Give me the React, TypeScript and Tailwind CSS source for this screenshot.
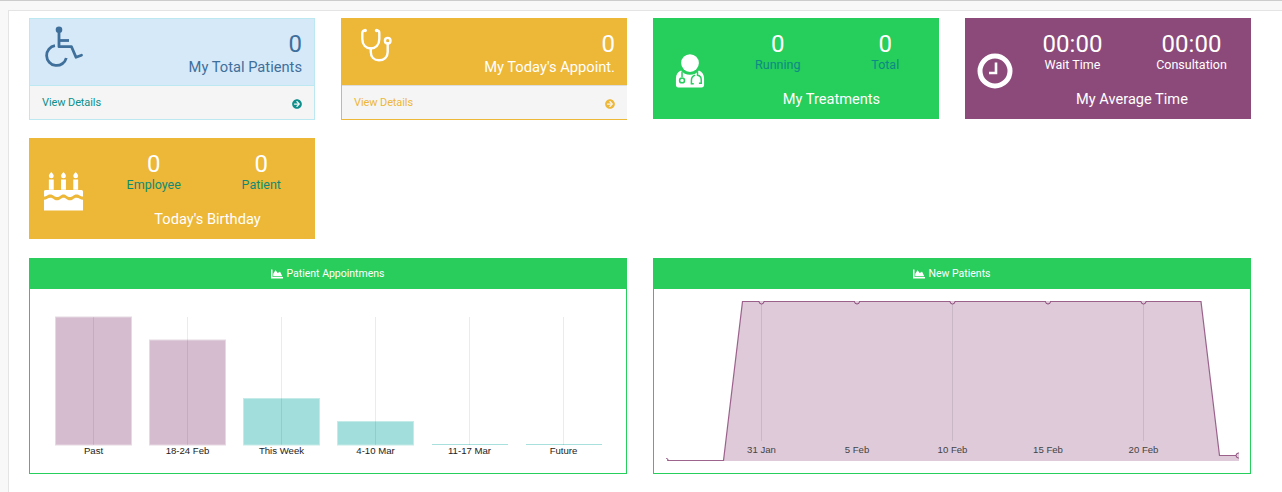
import { FaArrowCircleRight, FaChartArea } from "react-icons/fa";

const WheelchairIcon = () => (
  <svg width="40" height="42" viewBox="0 0 40 42" fill="none" stroke="#3f6f9b" strokeWidth="2.800">
    <circle cx="15" cy="3.700" r="3.300" fill="#3f6f9b" stroke="none" />
    <path d="M15 5v15.700h12.500l4.500 10.500 5.500-2" strokeLinecap="round" strokeLinejoin="round" />
    <path d="M15 14.500h10" />
    <path d="M11 19.600a10 10 0 1 0 11.300 12.400" />
  </svg>
);

const StethoscopeIcon = () => (
  <svg width="36" height="38" viewBox="0 0 36 38" fill="none" stroke="#fff" strokeWidth="2.400" strokeLinecap="round">
    <path d="M7 5.500h-.5C5 5.500 4.300 6.500 4.300 8v6c0 6 3.700 9.500 8.500 9.500s8.500-3.500 8.500-9.500V8c0-1.500-.8-2.500-2.300-2.500h-.3" />
    <circle cx="7.200" cy="5.500" r="1.700" fill="#fff" stroke="none" />
    <circle cx="18.600" cy="5.500" r="1.700" fill="#fff" stroke="none" />
    <path d="M12.800 23.500V27c0 5 3.200 8.300 8.200 8.300s8.700-3.300 8.700-8.300v-8.500" />
    <circle cx="29.700" cy="15.700" r="2.800" />
  </svg>
);

const DoctorIcon = () => (
  <svg width="30" height="34" viewBox="0 0 32 36">
    <circle cx="16" cy="9.500" r="9.500" fill="#fff" />
    <path d="M6.500 17.500C3 19 1 21.500 1 26v7c0 1.500 1 2.500 2.500 2.500h25c1.500 0 2.500-1 2.500-2.500v-7c0-4.500-2-7-5.500-8.500C23.500 20.500 20 22 16 22s-7.500-1.500-9.500-4.500z" fill="#fff" />
    <path d="M7.500 18.500v6" stroke="#26ce5c" strokeWidth="1.600" fill="none" />
    <circle cx="7.500" cy="28" r="2.600" fill="none" stroke="#26ce5c" strokeWidth="1.600" />
    <path d="M24 18.500v4c3 .5 4 3 4 5v3.500h-2.500M20 31.500h-2.500V28c0-2.500 1.500-5 4-5.500" fill="none" stroke="#26ce5c" strokeWidth="1.600" />
  </svg>
);

const ClockIcon = () => (
  <svg width="36" height="36" viewBox="0 0 36 36" fill="none" stroke="#fff">
    <circle cx="18" cy="18" r="15" strokeWidth="5" />
    <path d="M19 9.500v10.500h-7" strokeWidth="2.600" />
  </svg>
);

const CakeIcon = () => (
  <svg width="41" height="39" viewBox="0 0 42 42" preserveAspectRatio="none" fill="#fff">
    <path d="M8.500 0c1.800 2 2.500 3.200 2.500 4.300a2.500 2.500 0 0 1-5 0C6 3.200 6.700 2 8.500 0zM21 0c1.800 2 2.500 3.200 2.500 4.300a2.500 2.500 0 0 1-5 0C18.500 3.200 19.200 2 21 0zM33.500 0c1.800 2 2.500 3.200 2.500 4.300a2.500 2.500 0 0 1-5 0C31 3.200 31.700 2 33.500 0z" />
    <path d="M6 8h5v11H6zM18.500 8h5v11h-5zM31 8h5v11h-5z" />
    <path d="M2.500 19.500h37c1 0 1.500 1 1.500 2v5c-3 0-3.500-2.200-6.800-2.200S31 27 27.500 27s-3.500-2.700-6.500-2.700-3 2.700-6.500 2.700-3.800-2.700-7-2.700S4 26.500 1 26.500v-5c0-1 .5-2 1.500-2z" />
    <path d="M1 30c3 0 3.700-2.300 6.700-2.300S11 30.500 14.500 30.500 18 27.800 21 27.800s3 2.700 6.500 2.700 3.700-2.800 6.700-2.800 3.800 2.300 6.800 2.300v11.500H1z" />
  </svg>
);

const SummaryCard = ({ icon, value, title, link, tone }: { icon: React.ReactNode; value: string; title: string; link: string; tone: "blue" | "yellow" }) => {
  const blue = tone === "blue";
  return (
    <div className={blue ? "h-[102px] flex flex-col border border-[#bce8f1]" : "h-[102px] flex flex-col border-l border-b border-[#edb737]"}>
      <div className={blue ? "h-[66px] bg-[#d6e9f8] flex justify-between text-[#3f6f9b] pl-[14px] pr-3" : "h-[67px] bg-[#edb737] flex justify-between text-white pl-[16px] pr-3"}>
        <div className="pt-[7px]">{icon}</div>
        <div className={blue ? "text-right pt-[10px]" : "text-right pt-[11px]"}>
          <div className="text-[24px] leading-[30px]">{value}</div>
          <div className="text-[14.700px] leading-[22px] -mt-[3px] whitespace-nowrap">{title}</div>
        </div>
      </div>
      <div className={blue ? "flex-1 bg-[#f5f5f5] border-t border-[#bce8f1] flex items-center justify-between pl-3 pr-3 pt-[2px] text-[#0d8f8c]" : "flex-1 bg-[#f5f5f5] border-t border-[#dddddd] flex items-center justify-between pl-3 pr-3 pt-[2px] text-[#edb737]"}>
        <span className="text-[11px] tracking-[-0.1px]">{link}</span>
        <FaArrowCircleRight className="w-[10px] h-[10px]" />
      </div>
    </div>
  );
};

const StatCard = ({ icon, bg, left, stats, title, labelColor, iconPad }: { icon: React.ReactNode; bg: string; left: string; stats: [string, string][]; title: string; labelColor: string; iconPad: string }) => (
  <div className={`h-[101px] flex text-white ${bg}`}>
    <div className={`${left} shrink-0 flex items-end ${iconPad}`}>{icon}</div>
    <div className="flex-1 flex flex-col pt-[11px]">
      <div className="grid grid-cols-2 text-center">
        {stats.map(([val, label]) => (
          <div key={label}>
            <div className="text-[24px] leading-[30px]">{val}</div>
            <div className={`text-[12.500px] leading-[16px] -mt-[2px] ${labelColor}`}>{label}</div>
          </div>
        ))}
      </div>
      <div className="text-center text-[14.600px] leading-[20px] mt-[16px]">{title}</div>
    </div>
  </div>
);

const ChartPanel = ({ title, children }: { title: string; children: React.ReactNode }) => (
  <div className="h-[216px] border border-t-0 border-[#26ce5c] flex flex-col">
    <div className="-mx-px h-[31px] pt-[1px] bg-[#28cd5b] text-white flex items-center justify-center gap-[3px] text-[10.500px]">
      <FaChartArea className="w-[12px] h-[12px]" />
      <span>{title}</span>
    </div>
    <div className="flex-1">{children}</div>
  </div>
);

const bars = [
  { x: 26, top: 28, label: "Past", color: "purple" },
  { x: 120, top: 51, label: "18-24 Feb", color: "purple" },
  { x: 214, top: 109.500, label: "This Week", color: "teal" },
  { x: 308, top: 132.500, label: "4-10 Mar", color: "teal" },
  { x: 402, top: 155.500, label: "11-17 Mar", color: "teal", flat: true },
  { x: 496, top: 155.500, label: "Future", color: "teal", flat: true },
];

const BarChart = () => (
  <svg width="596" height="184" className="block">
    {bars.map((b) => (
      <g key={b.label}>
        {b.flat ? (
          <line x1={b.x} x2={b.x + 76} y1={b.top} y2={b.top} stroke="#a8e0dd" />
        ) : (
          <rect
            x={b.x - 0.5}
            y={b.top}
            width="76"
            height={156 - b.top}
            fill={b.color === "purple" ? "#d5bccf" : "#a2dedb"}
            stroke={b.color === "purple" ? "#e6d9e3" : "#c4ebe8"}
          />
        )}
        <line x1={b.x + 37.5} x2={b.x + 37.5} y1="28" y2="156" stroke="#000" strokeOpacity="0.08" />
        <text x={b.x + 37.5} y="165" textAnchor="middle" fontSize="9.600" fontFamily="Liberation Sans" fill="#222">
          {b.label}
        </text>
      </g>
    ))}
  </svg>
);

const ticks = [
  { x: 107.500, label: "31 Jan", grid: true },
  { x: 203, label: "5 Feb", grid: false },
  { x: 298.500, label: "10 Feb", grid: true },
  { x: 394, label: "15 Feb", grid: false },
  { x: 489.500, label: "20 Feb", grid: true },
];

const AreaChart = () => (
  <svg width="596" height="184" className="block">
    <defs>
      <clipPath id="plot">
        <rect x="12" y="12" width="573" height="160" />
      </clipPath>
    </defs>
    <path d="M69.500 171.500L88.500 12.500H547L565.500 166.500H585V172H69.500z" fill="#decad9" />
    {ticks.filter((t) => t.grid).map((t) => (
      <line key={t.x} x1={t.x} x2={t.x} y1="12.500" y2="152" stroke="#000" strokeOpacity="0.09" />
    ))}
    <g clipPath="url(#plot)">
      <path d="M12.500 171.500H69.500L88.500 12.500H547L565.500 166.500H584" fill="none" stroke="#8c4a7a" strokeOpacity="0.85" strokeWidth="1.200" />
      {ticks.map((t) => (
        <circle key={t.x} cx={t.x} cy="12.500" r="2.500" fill="#decad9" stroke="#8c4a7a" />
      ))}
      <circle cx="12.500" cy="171" r="1.500" fill="#fff" stroke="#8c4a7a" />
      <circle cx="584.500" cy="166.500" r="2.500" fill="#decad9" stroke="#8c4a7a" />
    </g>
    {ticks.map((t) => (
      <text key={t.label} x={t.x} y="164" textAnchor="middle" fontSize="9.600" fontFamily="Liberation Sans" fill="#444">
        {t.label}
      </text>
    ))}
  </svg>
);

export default function App() {
  return (
    <div className="h-[492px] overflow-hidden bg-[#f8f8f8] border-t border-[#cccccc] pt-[9px] pl-[8px] font-['Roboto',sans-serif]">
      <div className="h-full bg-white border-l border-t border-[#e4e4e4] pl-[20px] pt-[7px]">
        <div className="w-[1222px] grid grid-cols-4 gap-x-[26px] gap-y-[18px]">
          <SummaryCard icon={<WheelchairIcon />} value="0" title="My Total Patients" link="View Details" tone="blue" />
          <SummaryCard icon={<StethoscopeIcon />} value="0" title="My Today's Appoint." link="View Details" tone="yellow" />
          <StatCard icon={<DoctorIcon />} bg="bg-[#26ce5c]" left="w-[71px]" iconPad="pl-[22px] pb-[31px]" stats={[["0", "Running"], ["0", "Total"]]} title="My Treatments" labelColor="text-[#0d8a84]" />
          <StatCard icon={<ClockIcon />} bg="bg-[#8c4a7a]" left="w-[48px]" iconPad="pl-[12px] pb-[30px]" stats={[["00:00", "Wait Time"], ["00:00", "Consultation"]]} title="My Average Time" labelColor="text-white" />
          <StatCard icon={<CakeIcon />} bg="bg-[#edb737]" left="w-[71px]" iconPad="pl-[14px] pb-[28px]" stats={[["0", "Employee"], ["0", "Patient"]]} title="Today's Birthday" labelColor="text-[#0d8a74]" />
        </div>
        <div className="w-[1222px] grid grid-cols-2 gap-x-[26px] mt-[19px]">
          <ChartPanel title="Patient Appointmens"><BarChart /></ChartPanel>
          <ChartPanel title="New Patients"><AreaChart /></ChartPanel>
        </div>
      </div>
    </div>
  );
}
